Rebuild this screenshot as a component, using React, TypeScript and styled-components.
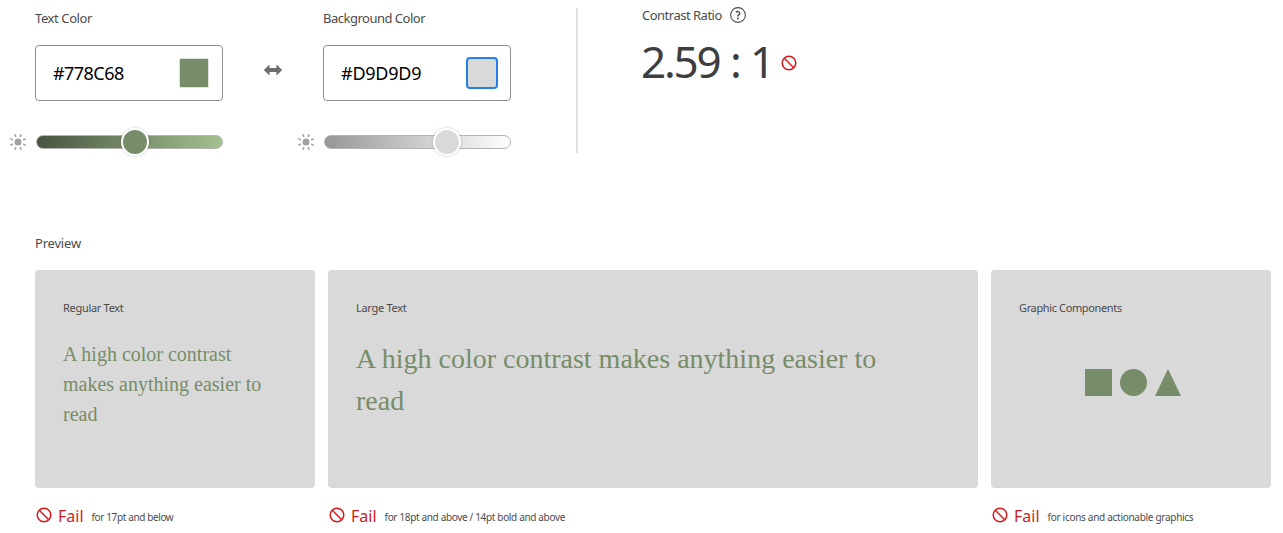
import React from "react";
import styled, { createGlobalStyle } from "styled-components";

const TEXT_COLOR = "#778c68";
const BACKGROUND_COLOR = "#d9d9d9";

const GlobalStyle = createGlobalStyle`
  * { box-sizing: border-box; }
  body {
    margin: 0;
    background: #fff;
    color: #4b4b4b;
    font-family: "Noto Sans", "Open Sans", sans-serif;
    overflow: hidden;
  }
`;

const Page = styled.main`
  width: 1283px;
  height: 533px;
  padding: 8px 12px 0 35px;
  overflow: hidden;
`;

const TopBar = styled.section`
  display: flex;
  height: 145px;
`;

const ColorColumn = styled.div`
  width: 188px;
`;

const Label = styled.div<{ $tracking: number }>`
  height: 20px;
  font-size: 13px;
  line-height: 20px;
  white-space: nowrap;
  letter-spacing: ${(p) => p.$tracking}px;
`;

const ColorField = styled.div`
  display: flex;
  align-items: center;
  justify-content: space-between;
  height: 56px;
  margin-top: 17px;
  padding: 0 12px 0 17px;
  border: 1px solid #8e8e8e;
  border-radius: 4px;
`;

const HexValue = styled.span<{ $tracking: number }>`
  color: #000;
  font-size: 18px;
  line-height: 24px;
  letter-spacing: ${(p) => p.$tracking}px;
`;

const Swatch = styled.span<{ $color: string; $selected?: boolean }>`
  width: ${(p) => (p.$selected ? 32 : 30)}px;
  height: ${(p) => (p.$selected ? 32 : 30)}px;
  margin-right: ${(p) => (p.$selected ? 0 : 1)}px;
  border: ${(p) => (p.$selected ? "2px solid #2680eb" : "1px solid #dde2da")};
  border-radius: ${(p) => (p.$selected ? 4 : 2)}px;
  background: ${(p) => p.$color};
`;

const SliderRow = styled.div`
  display: flex;
  align-items: center;
  height: 28px;
  margin: 27px 0 0 -25px;
`;

const Track = styled.div<{ $from: string; $to: string; $edge: string }>`
  position: relative;
  flex: 1;
  height: 14px;
  margin-left: 10px;
  border: 1px solid ${(p) => p.$edge};
  border-radius: 7px;
  background: linear-gradient(to right, ${(p) => p.$from}, ${(p) => p.$to});
`;

const Thumb = styled.span<{ $at: number; $color: string }>`
  position: absolute;
  top: -8px;
  left: ${(p) => p.$at}px;
  width: 28px;
  height: 28px;
  border: 2px solid #fff;
  border-radius: 50%;
  background: ${(p) => p.$color};
  box-shadow: 0 0 3px rgba(0, 0, 0, 0.22);
`;

const SwapSlot = styled.div`
  display: flex;
  justify-content: center;
  width: 100px;
  padding-top: 56px;
`;

const RatioColumn = styled.div`
  margin-left: 65px;
  padding-left: 64px;
  border-left: 2px solid #e1e1e1;
`;

const RatioHeading = styled.div`
  display: flex;
  align-items: center;
  gap: 8px;
  margin-top: -3px;
`;

const RatioValue = styled.div`
  display: flex;
  align-items: center;
  gap: 8px;
  height: 60px;
  margin-top: 8px;
`;

const RatioText = styled.span`
  padding-bottom: 4px;
  color: #3e3e3e;
  font-size: 44px;
  line-height: 60px;
  letter-spacing: -2.2px;
  word-spacing: 1.2px;
  margin-left: -1px;
  white-space: pre;
`;

const PreviewSection = styled.section`
  padding-top: 80px;
`;

const PreviewGrid = styled.div`
  display: grid;
  grid-template-columns: 280px 650px 280px;
  column-gap: 13px;
  margin-top: 17px;
`;

const Card = styled.div`
  height: 218px;
  padding: 28px;
  border-radius: 4px;
  background: ${BACKGROUND_COLOR};
`;

const CardTitle = styled.div<{ $tracking: number }>`
  height: 20px;
  font-size: 11px;
  line-height: 20px;
  white-space: nowrap;
  letter-spacing: ${(p) => p.$tracking}px;
`;

const Sample = styled.p<{ $large?: boolean }>`
  width: ${(p) => (p.$large ? 560 : 205)}px;
  margin: ${(p) => (p.$large ? 20 : 21)}px 0 0;
  color: ${TEXT_COLOR};
  font-family: "Liberation Serif", serif;
  font-size: ${(p) => (p.$large ? 28 : 20)}px;
  line-height: ${(p) => (p.$large ? 42 : 30)}px;
`;

const Shapes = styled.div`
  display: flex;
  padding-left: 66px;
  margin-top: 51px;
`;

const Result = styled.div`
  display: flex;
  align-items: center;
  height: 24px;
  margin-top: 15px;
  padding-left: 1px;
`;

const FailWord = styled.span`
  margin: 1px 8px 0 6px;
  color: #d7191c;
  font-size: 16px;
  line-height: 24px;
`;

const Caption = styled.span<{ $tracking: number }>`
  padding-top: 3px;
  font-size: 10px;
  line-height: 20px;
  white-space: nowrap;
  letter-spacing: ${(p) => p.$tracking}px;
`;

const SunIcon = () => (
  <svg width="16" height="16" viewBox="0 0 16 16" fill="none" stroke="#a3a3a3" strokeWidth="1.6">
    <circle cx="8" cy="8" r="3.5" fill="#a3a3a3" stroke="none" />
    {[22.5, 67.5, 112.5, 157.5, 202.5, 247.5, 292.5, 337.5].map((angle) => (
      <path key={angle} d="M8 -.2v2.7" transform={`rotate(${angle} 8 8)`} />
    ))}
  </svg>
);

const SwapIcon = () => (
  <svg width="18" height="12" viewBox="0 0 18 12" fill="#6e6e6e">
    <path d="M.3 5.5 5 .9q.6-.5.6.3V4h6.8V1.2q0-.8.6-.3l4.7 4.6q.5.5 0 1L13 11.1q-.6.5-.6-.3V8H5.6v2.8q0 .8-.6.3L.3 6.5q-.5-.5 0-1z" />
  </svg>
);

const ProhibitIcon = () => (
  <svg width="16" height="16" viewBox="0 0 16 16" fill="none" stroke="#d7191c" strokeWidth="1.5">
    <circle cx="8" cy="8" r="6.8" />
    <path d="m3.3 3.3 9.4 9.4" />
  </svg>
);

const HelpIcon = () => (
  <svg width="16" height="16" viewBox="0 0 16 16" fill="none" stroke="#4b4b4b">
    <circle cx="8" cy="8" r="7.4" strokeWidth="1.1" />
    <path d="M5.9 5.3C6.5 4.5 9.8 4 9.8 6.2c0 1.5-1.9 1.5-1.9 3.2" strokeWidth="1.5" />
    <circle cx="7.9" cy="11.5" r="1" fill="#4b4b4b" stroke="none" />
  </svg>
);

const ShapesIcon = () => (
  <svg width="96" height="27" viewBox="0 0 96 27" fill={TEXT_COLOR}>
    <path d="M0 0h27v27H0z" />
    <circle cx="48.5" cy="13.5" r="13.5" />
    <path d="M83 0 96 27H70z" />
  </svg>
);

interface ColorPickerProps {
  label: string;
  labelTracking: number;
  hex: string;
  hexTracking: number;
  selected?: boolean;
  from: string;
  to: string;
  edge: string;
  thumb: number;
}

const ColorPicker = (p: ColorPickerProps) => (
  <ColorColumn>
    <Label $tracking={p.labelTracking}>{p.label}</Label>
    <ColorField>
      <HexValue $tracking={p.hexTracking}>{p.hex}</HexValue>
      <Swatch $color={p.hex} $selected={p.selected} />
    </ColorField>
    <SliderRow>
      <SunIcon />
      <Track $from={p.from} $to={p.to} $edge={p.edge}>
        <Thumb $at={p.thumb} $color={p.hex} />
      </Track>
    </SliderRow>
  </ColorColumn>
);

const FailResult = ({ text, tracking }: { text: string; tracking: number }) => (
  <Result>
    <ProhibitIcon />
    <FailWord>Fail</FailWord>
    <Caption $tracking={tracking}>{text}</Caption>
  </Result>
);

export default function App() {
  return (
    <Page>
      <GlobalStyle />
      <TopBar>
        <ColorPicker
          label="Text Color"
          labelTracking={-0.4}
          hex="#778C68"
          hexTracking={-0.55}
          from="#475440"
          to="#a4c28f"
          edge="#b5b5b5"
          thumb={84}
        />
        <SwapSlot>
          <SwapIcon />
        </SwapSlot>
        <ColorPicker
          label="Background Color"
          labelTracking={-0.5}
          hex="#D9D9D9"
          hexTracking={-0.25}
          selected
          from="#969696"
          to="#ffffff"
          edge="#b5b5b5"
          thumb={108}
        />
        <RatioColumn>
          <RatioHeading>
            <Label $tracking={-0.5}>Contrast Ratio</Label>
            <HelpIcon />
          </RatioHeading>
          <RatioValue>
            <RatioText>2.59 : 1</RatioText>
            <ProhibitIcon />
          </RatioValue>
        </RatioColumn>
      </TopBar>
      <PreviewSection>
        <Label $tracking={-0.2}>Preview</Label>
        <PreviewGrid>
          <div>
            <Card>
              <CardTitle $tracking={-0.3}>Regular Text</CardTitle>
              <Sample>A high color contrast makes anything easier to read</Sample>
            </Card>
            <FailResult text="for 17pt and below" tracking={-0.38} />
          </div>
          <div>
            <Card>
              <CardTitle $tracking={-0.3}>Large Text</CardTitle>
              <Sample $large>A high color contrast makes anything easier to read</Sample>
            </Card>
            <FailResult text="for 18pt and above / 14pt bold and above" tracking={-0.34} />
          </div>
          <div>
            <Card>
              <CardTitle $tracking={-0.37}>Graphic Components</CardTitle>
              <Shapes>
                <ShapesIcon />
              </Shapes>
            </Card>
            <FailResult text="for icons and actionable graphics" tracking={-0.29} />
          </div>
        </PreviewGrid>
      </PreviewSection>
    </Page>
  );
}
